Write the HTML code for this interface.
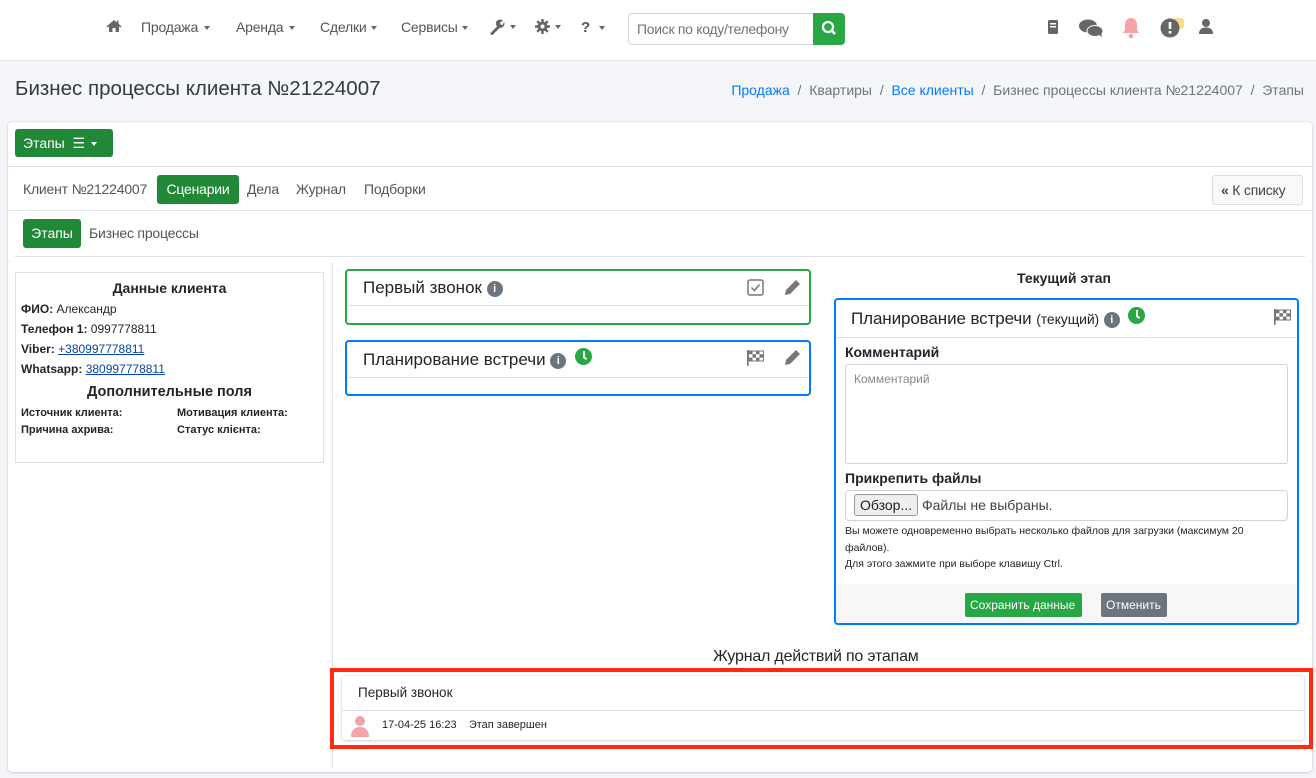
<!DOCTYPE html>
<html><head><meta charset="utf-8"><style>
*{box-sizing:border-box;margin:0;padding:0}
body{width:1316px;height:778px;overflow:hidden;background:#f4f6f9;font-family:"Liberation Sans",sans-serif;color:#212529;position:relative;font-size:14px}
.a{position:absolute}
.nav{left:0;top:0;width:1316px;height:61px;background:#fff;border-bottom:1px solid #dee2e6}
.ni{top:19px;color:#555;font-size:14px;letter-spacing:-0.2px}
.car{display:inline-block;border-top:4px solid #666;border-left:3.5px solid transparent;border-right:3.5px solid transparent;vertical-align:middle;margin-left:4px}
.card{left:8px;top:122px;width:1304px;height:650px;background:#fff;border-radius:4px;box-shadow:0 0 1px rgba(0,0,0,.2),0 1px 3px rgba(0,0,0,.15)}
.hl{height:1px;background:#dee2e6}
.btn-g{background:#218838;color:#fff;border-radius:3px}
.tab{top:181px;color:#555;font-size:14px;letter-spacing:-0.2px}
.ic{display:inline-block;width:16px;height:16px;border-radius:50%;background:#6c757d;color:#fff;font-size:11px;font-weight:bold;text-align:center;line-height:16px;vertical-align:1px}
.clk{display:inline-block;width:17px;height:17px;border-radius:50%;background:#28a745;vertical-align:0px;margin-left:4px;position:relative}
.clk:before{content:"";position:absolute;left:7.5px;top:3px;width:2px;height:7px;background:#fff}
.clk:after{content:"";position:absolute;left:8px;top:9px;width:4px;height:2px;background:#fff;transform:rotate(40deg)}
</style></head><body>
<div class="a nav"></div>
<svg class="a" style="left:106px;top:19px" width="16" height="14" viewBox="0 0 16 14"><path d="M8 1L0.5 7.5 1.5 8.5 3 7.2V13H6.5V9H9.5V13H13V7.2L14.5 8.5 15.5 7.5 12.5 4.8V1.5H11V3.5Z" fill="#666"/></svg>
<div class="a ni" style="left:141px">Продажа<span class="car" style="margin-left:6px"></span></div>
<div class="a ni" style="left:236px">Аренда<span class="car" style="margin-left:6px"></span></div>
<div class="a ni" style="left:320px">Сделки<span class="car"></span></div>
<div class="a ni" style="left:401px">Сервисы<span class="car"></span></div>
<svg class="a" style="left:490px;top:19px" width="16" height="16"><path d="M2 14.5L9 7.5" stroke="#666" stroke-width="3" stroke-linecap="round"/><path d="M8 8a4 4 0 1 1 5-6l-3 1.5.5 2 2 .5 1.5-3a4 4 0 0 1-6 5z" fill="#666"/></svg>
<span class="a car" style="left:506px;top:25px"></span>
<svg class="a" style="left:535px;top:19px" width="15" height="15" viewBox="0 0 15 15"><circle cx="7.5" cy="7.5" r="5" fill="#666"/><path d="M6.3 0h2.4v3H6.3zM6.3 12h2.4v3H6.3zM0 6.3h3v2.4H0zM12 6.3h3v2.4h-3z" fill="#666"/><path d="M6.3 0h2.4v3H6.3zM6.3 12h2.4v3H6.3zM0 6.3h3v2.4H0zM12 6.3h3v2.4h-3z" fill="#666" transform="rotate(45 7.5 7.5)"/><circle cx="7.5" cy="7.5" r="2" fill="#fff"/></svg>
<span class="a car" style="left:551px;top:25px"></span>
<div class="a ni" style="left:581px;font-weight:bold;font-size:15px">?<span class="car" style="margin-left:9px"></span></div>
<div class="a" style="left:628px;top:13px;width:186px;height:32px;border:1px solid #ced4da;border-radius:4px 0 0 4px;color:#6c757d;font-size:14px;padding:7px 8px;letter-spacing:-0.3px;white-space:nowrap;overflow:hidden">Поиск по коду/телефону</div>
<div class="a" style="left:813px;top:13px;width:32px;height:32px;background:#28a745;border-radius:0 4px 4px 0"><svg width="32" height="32"><circle cx="15" cy="14" r="5" stroke="#fff" stroke-width="2.2" fill="none"/><path d="M18.5 17.5L22 21" stroke="#fff" stroke-width="2.6"/></svg></div>
<svg class="a" style="left:1047px;top:19px" width="12" height="16"><rect x="1" y="1" width="10" height="14" rx="1.5" fill="#666"/><rect x="3" y="4" width="6" height="1.5" fill="#fff"/><rect x="3" y="7" width="6" height="1.5" fill="#fff"/></svg>
<svg class="a" style="left:1078px;top:18px" width="26" height="20"><ellipse cx="10" cy="8" rx="9" ry="6.5" fill="#666"/><ellipse cx="17" cy="13" rx="8" ry="5.5" fill="#666" stroke="#fff" stroke-width="1"/><path d="M20 16l4 3-1-5z" fill="#666"/></svg>
<svg class="a" style="left:1121px;top:17px" width="20" height="22"><path d="M10 1C6 1 4 4 4 8v5l-2 3h16l-2-3V8c0-4-2-7-6-7z" fill="#f4a3a8"/><circle cx="10" cy="19" r="2.3" fill="#f4a3a8"/></svg>
<svg class="a" style="left:1159px;top:17px" width="28" height="22"><rect x="14" y="1" width="11" height="11" rx="3" fill="#f3d46c" opacity=".8"/><circle cx="11" cy="11" r="9.5" fill="#666"/><rect x="9.7" y="5" width="2.6" height="7" fill="#fff"/><rect x="9.7" y="14" width="2.6" height="2.6" fill="#fff"/></svg>
<svg class="a" style="left:1199px;top:18px" width="14" height="17"><circle cx="7" cy="5" r="4" fill="#666"/><path d="M0 16c0-5 3-6.5 7-6.5s7 1.5 7 6.5z" fill="#666"/></svg>

<div class="a" style="left:15px;top:77px;font-size:20.5px;color:#343a40">Бизнес процессы клиента №21224007</div>
<div class="a" style="right:12px;top:82px;font-size:14px;color:#6c757d;white-space:nowrap"><span style="color:#007bff">Продажа</span> &nbsp;/&nbsp; Квартиры &nbsp;/&nbsp; <span style="color:#007bff">Все клиенты</span> &nbsp;/&nbsp; Бизнес процессы клиента №21224007 &nbsp;/&nbsp; Этапы</div>

<div class="a card"></div>
<div class="a btn-g" style="left:15px;top:129px;width:98px;height:28px;font-size:14px;padding:6px 8px">Этапы &nbsp;☰<span class="car" style="border-top-color:#fff;margin-left:6px"></span></div>
<div class="a hl" style="left:8px;top:166px;width:1304px"></div>
<div class="a tab" style="left:23px">Клиент №21224007</div>
<div class="a btn-g" style="left:157px;top:175px;width:82px;height:29px;font-size:14px;padding:6px 0;text-align:center;letter-spacing:-0.2px">Сценарии</div>
<div class="a tab" style="left:247px">Дела</div>
<div class="a tab" style="left:296px">Журнал</div>
<div class="a tab" style="left:364px">Подборки</div>
<div class="a" style="left:1212px;top:175px;width:91px;height:30px;border:1px solid #ddd;border-radius:3px;background:#f8f9fa;font-size:14px;padding:6px 8px;color:#444;letter-spacing:-0.2px"><b>«</b> К списку</div>
<div class="a hl" style="left:8px;top:210px;width:1304px"></div>
<div class="a btn-g" style="left:23px;top:219px;width:58px;height:29px;font-size:14px;padding:6px 0;text-align:center">Этапы</div>
<div class="a tab" style="left:89px;top:225px">Бизнес процессы</div>
<div class="a hl" style="left:15px;top:256px;width:1290px"></div>
<div class="a" style="left:332px;top:262px;width:1px;height:506px;background:#dee2e6"></div>

<div class="a" style="left:15px;top:272px;width:309px;height:191px;border:1px solid #dee2e6;font-size:12px;line-height:20px;padding:4px 5px">
<div style="text-align:center;font-weight:bold;font-size:14px;line-height:22px">Данные клиента</div>
<div><b>ФИО:</b> Александр</div>
<div><b>Телефон 1:</b> 0997778811</div>
<div><b>Viber:</b> <u style="color:#0645ad">+380997778811</u></div>
<div><b>Whatsapp:</b> <u style="color:#0645ad">380997778811</u></div>
<div style="text-align:center;font-weight:bold;font-size:14.5px;line-height:26px">Дополнительные поля</div>
<div style="font-size:11px;font-weight:bold;line-height:17px;position:relative"><span>Источник клиента:</span><span style="position:absolute;left:156px">Мотивация клиента:</span><br><span>Причина ахрива:</span><span style="position:absolute;left:156px;top:17px">Статус клієнта:</span></div>
</div>

<div class="a" style="left:345px;top:269px;width:466px;height:56px;border:2px solid #28a745;border-radius:4px"></div>
<div class="a hl" style="left:347px;top:305px;width:462px"></div>
<div class="a" style="left:363px;top:278px;font-size:17px">Первый звонок <span class="ic">i</span></div>
<svg class="a" style="left:747px;top:279px" width="17" height="17"><rect x="1" y="1" width="15" height="15" rx="2" fill="none" stroke="#777" stroke-width="1.5"/><path d="M4.5 8.5l3 3 5-6" stroke="#777" stroke-width="1.5" fill="none"/></svg>
<svg class="a" style="left:783px;top:278px" width="19" height="19"><path d="M2 17l1-5L13 2l4 4L7 16z" fill="#777"/></svg>

<div class="a" style="left:345px;top:340px;width:466px;height:56px;border:2px solid #007bff;border-radius:4px"></div>
<div class="a hl" style="left:347px;top:377px;width:462px"></div>
<div class="a" style="left:363px;top:348px;font-size:17px">Планирование встречи <span class="ic">i</span> <span class="clk"></span></div>
<svg class="a" style="left:745px;top:349px" width="20" height="18"><rect x="2" y="1" width="1.6" height="16" fill="#777"/><path d="M3.5 2h15v10h-15z" fill="#fff" stroke="#777"/><path d="M4 2h3.5v3.3H4zM11 2h3.5v3.3H11zM7.5 5.3H11v3.3H7.5zM14.5 5.3H18v3.3h-3.5zM4 8.6h3.5v3.3H4zM11 8.6h3.5v3.3H11z" fill="#777"/></svg>
<svg class="a" style="left:783px;top:348px" width="19" height="19"><path d="M2 17l1-5L13 2l4 4L7 16z" fill="#777"/></svg>

<div class="a" style="left:1017px;top:270px;font-weight:bold;font-size:14px">Текущий этап</div>
<div class="a" style="left:834px;top:298px;width:465px;height:327px;border:2px solid #007bff;border-radius:4px;overflow:hidden;background:#fff">
<div style="height:38px;border-bottom:1px solid #dee2e6;padding:7px 15px;font-size:17px;position:relative;letter-spacing:-0.1px">Планирование встречи <span style="font-size:14px">(текущий)</span> <span class="ic">i</span> <span class="clk"></span>
<svg style="position:absolute;left:436px;top:8px" width="20" height="18"><rect x="2" y="1" width="1.6" height="16" fill="#777"/><path d="M3.5 2h15v10h-15z" fill="#fff" stroke="#777"/><path d="M4 2h3.5v3.3H4zM11 2h3.5v3.3H11zM7.5 5.3H11v3.3H7.5zM14.5 5.3H18v3.3h-3.5zM4 8.6h3.5v3.3H4zM11 8.6h3.5v3.3H11z" fill="#777"/></svg></div>
<div style="padding:6px 9px 0">
<div style="font-weight:bold;font-size:14px;line-height:16px">Комментарий</div>
<div style="margin-top:4px;height:100px;border:1px solid #ced4da;border-radius:3px;font-size:12px;color:#888;padding:7px 8px">Комментарий</div>
<div style="font-weight:bold;font-size:14px;margin-top:6px;line-height:16px">Прикрепить файлы</div>
<div style="margin-top:4px;height:31px;border:1px solid #ced4da;border-radius:4px;padding:3px 8px;font-size:14px;color:#444"><span style="display:inline-block;border:1px solid #999;border-radius:3px;background:#eee;padding:2px 5px;color:#222">Обзор...</span> Файлы не выбраны.</div>
<div style="font-size:10.5px;line-height:16.5px;margin-top:2px">Вы можете одновременно выбрать несколько файлов для загрузки (максимум 20 файлов).<br>Для этого зажмите при выборе клавишу Ctrl.</div>
</div>
<div style="position:absolute;left:0;top:284px;width:461px;height:41px;background:#f7f7f7"></div>
<div style="position:absolute;left:129px;top:293px;width:117px;height:24px;background:#28a745;color:#fff;font-size:12px;padding:5px 5px;border-radius:2px">Сохранить данные</div>
<div style="position:absolute;left:265px;top:293px;width:66px;height:24px;background:#6c757d;color:#fff;font-size:12px;padding:5px 5px;border-radius:2px">Отменить</div>
</div>

<div class="a" style="left:713px;top:648px;font-size:16px;letter-spacing:-0.2px">Журнал действий по этапам</div>
<div class="a" style="left:330px;top:668px;width:983px;height:81px;border:4px solid #ff2a10"></div>
<div class="a" style="left:342px;top:676px;width:962px;height:64px;background:#fff;border-radius:3px;box-shadow:0 0 1px rgba(0,0,0,.3),0 1px 3px rgba(0,0,0,.15)"></div>
<div class="a" style="left:358px;top:685px;font-size:13.5px">Первый звонок</div>
<div class="a hl" style="left:342px;top:710px;width:962px"></div>
<svg class="a" style="left:350px;top:715px" width="20" height="22"><circle cx="10" cy="6" r="5" fill="#f4a3a8"/><path d="M1 22c0-7 4-10 9-10s9 3 9 10z" fill="#f4a3a8"/></svg>
<div class="a" style="left:382px;top:719px;font-size:11px">17-04-25 16:23 &nbsp;&nbsp; Этап завершен</div>
</body></html>
